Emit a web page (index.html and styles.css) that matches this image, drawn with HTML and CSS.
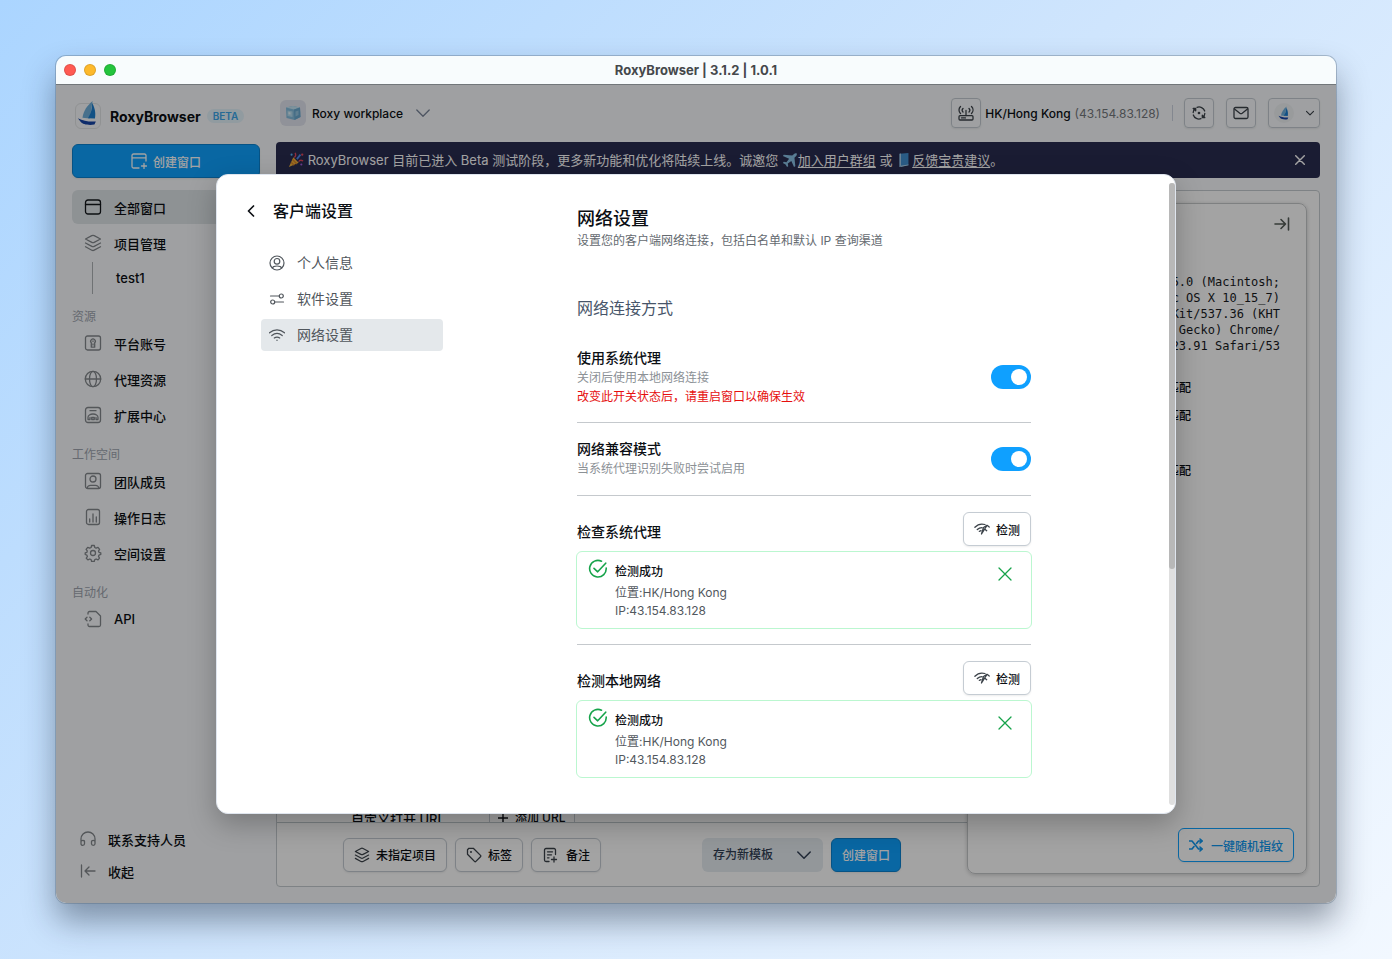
FILE: index.html
```html
<!DOCTYPE html>
<html lang="zh-CN">
<head>
<meta charset="utf-8">
<title>RoxyBrowser</title>
<link rel="stylesheet" href="styles.css">
</head>
<body>
<svg class="defs" aria-hidden="true">
  <symbol id="i-boat" viewBox="0 0 26 30">
    <path d="M18 1C12 6 8 12 7 19l8 1z" fill="#6fb0dc"/>
    <path d="M17.500 3C21 9 21.500 15 20.500 20L13 19.500c3-5 4.500-10 4.500-16.500z" fill="#1d7fd0"/>
    <path d="M2 19.500c6 3 12 4 19.500 3.500L20 26.500c-6 1-13 0-15-3z" fill="#1745a8"/>
  </symbol>
  <symbol id="i-layers" viewBox="0 0 18 18"><path d="M7.800 1.600a2.600 2.600 0 0 1 2.400 0L16.500 5l-6.300 3.300a2.600 2.600 0 0 1-2.400 0L1.500 5zM1.500 9l6.300 3.400a2.600 2.600 0 0 0 2.400 0L16.500 9M1.500 12.800l6.300 3.400a2.600 2.600 0 0 0 2.400 0l6.300-3.400"/></symbol>
  <symbol id="i-chev" viewBox="0 0 14 14"><path d="m.8 4 6.200 6.300L13.200 4"/></symbol>
  <symbol id="i-x" viewBox="0 0 14 14"><path d="m1 1 12 12M13 1 1 13"/></symbol>
  <symbol id="i-signal" viewBox="0 0 16 16"><path d="M.9 6.200C3.500 3.500 7.500 2.500 11 3.500M3.300 8.600c1.400-1.300 3-1.900 4.700-1.900M13 4.300 7.500 13l2-6.500zM11.500 8.700l1.200 1M13.700 4.800l1.500 1.200M5.300 10.300l1.700-.6"/></symbol>
  <symbol id="i-check" viewBox="0 0 20 20"><path d="M13.500 2.200A8.300 8.300 0 1 0 18.200 9M6 9.300l3.700 3.500 8-8.600"/></symbol>
</svg>
<div class="window">
  <header class="titlebar">
    <span class="light red"></span><span class="light amber"></span><span class="light green"></span>
    <h1>RoxyBrowser | 3.1.2 | 1.0.1</h1>
  </header>
  <div class="app">
    <aside class="sidebar">
      <div class="brand">
        <span class="logo"><svg><use href="#i-boat"/></svg></span>
        <strong>RoxyBrowser</strong><span class="beta">BETA</span>
      </div>
      <button class="btn primary wide"><svg class="ic s16" viewBox="0 0 16 16"><path d="M15 8V2.500A1.500 1.500 0 0 0 13.500 1h-11A1.500 1.500 0 0 0 1 2.500v11A1.500 1.500 0 0 0 2.500 15H8M1 4.800h14M13 10.500v5M10.500 13h5"/></svg>创建窗口</button>
      <nav class="menu">
        <a href="#" class="active"><svg class="ic s18" viewBox="0 0 18 18"><rect x="1.500" y="2" width="15" height="14" rx="2.500"/><path d="M1.500 6.500h15"/></svg>全部窗口</a>
        <a href="#"><svg class="ic s18"><use href="#i-layers"/></svg>项目管理</a>
        <a href="#" class="child">test1</a>
        <h2>资源</h2>
        <a href="#"><svg class="ic s18" viewBox="0 0 18 18"><rect x="1.500" y="2" width="15" height="14" rx="2"/><path d="M7.300 8.800a2.300 2.300 0 1 1 3.400 0v4.400H7.300zM9 6.800v.7M9 10v1"/></svg>平台账号</a>
        <a href="#"><svg class="ic s18" viewBox="0 0 18 18"><circle cx="9" cy="9" r="7.700"/><ellipse cx="9" cy="9" rx="3.500" ry="7.700"/><path d="M1.300 9h15.400"/></svg>代理资源</a>
        <a href="#"><svg class="ic s18" viewBox="0 0 18 18"><rect x="1.500" y="1.500" width="15" height="15" rx="2.500"/><path d="M6 4.700h6M4 13v-1.500a5 3.500 0 0 1 10 0V13M4 13.500h2v-2M14 13.500h-2v-2M7.700 11.500v2h2.600v-2z"/></svg>扩展中心</a>
        <h2>工作空间</h2>
        <a href="#"><svg class="ic s18" viewBox="0 0 18 18"><rect x="1.500" y="1.500" width="15" height="15" rx="2"/><circle cx="9" cy="7" r="3"/><path d="M3 16.300c.5-2.300 1.700-3 3.500-3h5c1.800 0 3 .7 3.500 3"/></svg>团队成员</a>
        <a href="#"><svg class="ic s18" viewBox="0 0 18 18"><rect x="2.500" y="1.500" width="13" height="15" rx="2"/><path d="M5.700 11v3M9 6v8M12.300 9v5"/></svg>操作日志</a>
        <a href="#"><svg class="ic s18" viewBox="0 0 18 18"><circle cx="9" cy="9" r="2.500"/><path d="m7.600 1.500-.5 2-1.400.7-2-.9-1.600 2 1.200 1.600-.4 1.400-1.700.5v1.700l1.700.7.500 1.300-1.100 1.700 1.600 1.700 1.900-.9 1.300.6.500 1.900h2.600l.6-1.900 1.300-.6 1.900.9 1.500-1.800-1-1.700.5-1.300 1.800-.7V8.800l-1.800-.5-.5-1.300 1.100-1.700-1.600-2-1.900.9-1.300-.7-.5-2z"/></svg>空间设置</a>
        <h2>自动化</h2>
        <a href="#"><svg class="ic s18" viewBox="0 0 18 18"><path d="M4 4V3a1.500 1.500 0 0 1 1.500-1.500H12L16.500 6v9a1.500 1.500 0 0 1-1.500 1.500H5.500A1.500 1.500 0 0 1 4 15v-1M3 7.200 1.200 9 3 10.800M5.800 7.200 7.600 9l-1.800 1.800"/></svg>API</a>
      </nav>
      <nav class="menu low">
        <a href="#"><svg class="ic s16" viewBox="0 0 16 16"><path d="M1 12V8a7 7 0 0 1 14 0v4M1 10.500C1 9 4.500 9 4.500 10.500v2.300c0 2-3.500 2-3.500 0zM15 10.500c0-1.500-3.500-1.500-3.500 0v2.300c0 2 3.500 2 3.500 0z"/></svg>联系支持人员</a>
        <a href="#"><svg class="ic s16" viewBox="0 0 16 16"><path d="M1.500 2v12M15 8H5M9 4 5 8l4 4"/></svg>收起</a>
      </nav>
    </aside>
    <main class="main">
      <div class="topbar">
        <div class="space">
          <span class="cube"><svg viewBox="0 0 20 20"><path d="m3 4.500 7-1.500 7 1.500.5 9.500-6 3-8-2z" fill="#86bede"/><path d="m3 4.500 8 2 6-2L10 3z" fill="#c4e5f5"/><path d="m11 6.500 6-2 .5 9.500-6 3z" fill="#6aa9d0"/><path d="m4.500 7.500 5 1v5.500l-5-1z" fill="#b5dcf0"/><path d="m12.500 8.500 3-1v4.500l-3 1.500z" fill="#93c6e2"/><path d="m5.500 9 2 .4v2.200l-2-.4z" fill="#e6f6fd"/></svg></span>
          <span class="pick"><select aria-label="工作空间"><option>Roxy workplace</option></select><svg class="ic s14"><use href="#i-chev"/></svg></span>
        </div>
        <button class="square" aria-label="网络"><svg class="ic s16" viewBox="0 0 16 16"><rect x="1" y="10.700" width="14" height="4.300" rx="1"/><path d="M3.500 12.900h4M8 5.500v5M5 3.500c-1 1-1 2.500 0 3.500M11 3.500c1 1 1 2.500 0 3.500M2.500 1.500C.5 3.500.5 6.500 2.500 8.500M13.500 1.500c2 2 2 5 0 7"/></svg></button>
        <p class="place"><b>HK/Hong Kong</b> <span>(43.154.83.128)</span></p>
        <i class="rule"></i>
        <button class="square gap" aria-label="刷新"><svg class="ic s14" viewBox="0 0 14 14"><path d="M5 1.300A6 6 0 0 1 12.700 5M9 12.700A6 6 0 0 1 1.300 9M1.200 6.500a6 6 0 0 1 1.600-3.600M12.800 7.500a6 6 0 0 1-1.600 3.600"/><path d="M1.200 2.500h2.500v2.300zM12.800 11.500h-2.500V9.200z" fill="currentColor"/><circle cx="7" cy="7" r=".7" fill="currentColor"/></svg></button>
        <button class="square gap" aria-label="邮件"><svg class="ic s16" viewBox="0 0 16 16"><rect x="1" y="2.500" width="14" height="11" rx="1.500"/><path d="m1.500 4 5.300 4.200a2 2 0 0 0 2.400 0L14.500 4"/></svg></button>
        <button class="square user gap" aria-label="账号"><span><svg class="face"><use href="#i-boat"/></svg></span><svg class="ic s8"><use href="#i-chev"/></svg></button>
      </div>
      <div class="banner">
        <p><svg class="emo" viewBox="0 0 18 18"><path d="m1 17 5-11 6 6z" fill="#f2b43a"/><path d="m3.500 11.500 3.500 3.500M5 8.500l5 5" stroke="#d9842a" stroke-width="1.500"/><path d="M7 6C9 5 9 3 8 1M12 11c1-2 3-2 5-1" stroke="#e0475c" stroke-width="1.500" fill="none"/><path d="m10 8 4-5" stroke="#4d8bf0" stroke-width="2"/><circle cx="16" cy="3" r="1.300" fill="#e0475c"/><circle cx="4" cy="3" r="1.200" fill="#58b4f4"/><circle cx="15" cy="14" r="1.200" fill="#a45de0"/></svg> RoxyBrowser 目前已进入 Beta 测试阶段，更多新功能和优化将陆续上线。诚邀您 <a href="#"><svg class="emo" viewBox="0 0 18 18"><path d="M16.500 1.500c-2-.7-3 .3-5 2.500L2 3 1 4.500l7 3-3 4-3-.5-1 1.300 3 1.700 1.700 3L7 16l-.5-3 4-3 3 7 1.500-1-1-9.500c2.200-2 3.200-3 2.500-5z" fill="#8cc4e8"/></svg>加入用户群组</a> 或 <a href="#"><svg class="emo" viewBox="0 0 18 18"><path d="m4 2 10-1v14l-10 2z" fill="#4291d2"/><path d="m4 2 1.500-.2v15L4 17zM5 17l9-2v-1l-9 1.500z" fill="#b7d6ec"/></svg>反馈宝贵建议</a>。</p>
        <button aria-label="关闭公告"><svg class="ic s10"><use href="#i-x"/></svg></button>
      </div>
      <section class="panel">
        <div class="left">
          <div class="form"><div class="urlrow"><span>自定义打开 URL</span><button><svg class="ic s10" viewBox="0 0 14 14"><path d="M7 0v14M0 7h14"/></svg>添加 URL</button></div></div>
          <div class="foot">
            <button class="btn"><svg class="ic s16"><use href="#i-layers"/></svg>未指定项目</button>
            <button class="btn"><svg class="ic s16" viewBox="0 0 16 16"><path d="M1.500 2.700v4.500l7 7.200a1 1 0 0 0 1.400 0l4.600-4.600a1 1 0 0 0 0-1.400L7.300 1.300H2.900z"/><circle cx="5" cy="5" r=".4"/></svg>标签</button>
            <button class="btn note-btn"><svg class="ic s16" viewBox="0 0 16 16"><path d="M13.500 7.500V3A1.500 1.500 0 0 0 12 1.500H4A1.500 1.500 0 0 0 2.500 3v10A1.500 1.500 0 0 0 4 14.500h3M5.500 4.800h5M5.500 7.800h4M5.500 10.800h1.500M12 10v5M9.500 12.500h5"/></svg>备注</button>
            <span class="pick tpl"><select aria-label="模板"><option>存为新模板</option></select><svg class="ic s14"><use href="#i-chev"/></svg></span>
            <button class="btn primary">创建窗口</button>
          </div>
        </div>
        <div class="card">
          <button class="fold" aria-label="折叠"><svg class="ic s16" viewBox="0 0 16 16"><path d="M14.500 2v12M1 8h10M7 3.500 11.500 8 7 12.500"/></svg></button>
          <p class="ua">Mozilla/5.0 (Macintosh;<br>Intel Mac OS X 10_15_7)<br>AppleWebKit/537.36 (KHT<br>ML, like Gecko) Chrome/<br>131.0.6723.91 Safari/53</p>
          <ul class="match"><li>基于 IP 匹配</li><li>基于 IP 匹配</li><li class="later">基于 IP 匹配</li></ul>
          <button class="btn outline"><svg class="ic s14" viewBox="0 0 14 14"><path d="M.5 3H3l6.500 8H13M.5 11H3l2-2.500M7.500 5.500 9.500 3H13M11 1l2.300 2L11 5M11 9l2.300 2L11 13"/></svg>一键随机指纹</button>
        </div>
      </section>
    </main>
    <div class="overlay">
      <div class="modal" role="dialog" aria-label="客户端设置">
        <div class="side">
          <div class="head"><button aria-label="返回"><svg class="ic" viewBox="0 0 8 12"><path d="M6.500 1 1.500 6l5 5"/></svg></button><h2>客户端设置</h2></div>
          <nav>
            <a href="#"><svg class="ic s16" viewBox="0 0 16 16"><circle cx="8" cy="8" r="7"/><circle cx="8" cy="6.300" r="2.800"/><path d="M3.300 13c.7-1.800 2-2 4.700-2s4 .2 4.700 2"/></svg>个人信息</a>
            <a href="#"><svg class="ic s16" viewBox="0 0 16 16"><circle cx="12.300" cy="5" r="2"/><circle cx="3.700" cy="11" r="2"/><path d="M1.500 5h8.800M5.700 11h8.800"/></svg>软件设置</a>
            <a href="#" class="on"><svg class="ic s16" viewBox="0 0 16 16"><path d="M.5 5.800c4.500-4 10.500-4 15 0M2.800 8.500c3.300-2.700 7.100-2.700 10.400 0M5.300 11c1.800-1.200 3.600-1.200 5.400 0M8 13.200v.2"/></svg>网络设置</a>
          </nav>
        </div>
        <div class="body">
          <h2>网络设置</h2>
          <p class="lead">设置您的客户端网络连接，包括白名单和默认 IP 查询渠道</p>
          <h3>网络连接方式</h3>
          <div class="row first"><div><label for="sys">使用系统代理</label><p>关闭后使用本地网络连接</p><p class="warn">改变此开关状态后，请重启窗口以确保生效</p></div><input type="checkbox" id="sys" class="toggle" checked></div>
          <div class="row"><div><label for="compat">网络兼容模式</label><p>当系统代理识别失败时尝试启用</p></div><input type="checkbox" id="compat" class="toggle" checked></div>
          <div class="probe">
            <div class="cap"><h4>检查系统代理</h4><button class="btn"><svg class="ic s16"><use href="#i-signal"/></svg>检测</button></div>
            <div class="result"><svg class="ic s20"><use href="#i-check"/></svg><div><b>检测成功</b><p>位置:HK/Hong Kong</p><p>IP:43.154.83.128</p></div><button aria-label="关闭"><svg class="ic s14"><use href="#i-x"/></svg></button></div>
          </div>
          <div class="probe last">
            <div class="cap"><h4>检测本地网络</h4><button class="btn"><svg class="ic s16"><use href="#i-signal"/></svg>检测</button></div>
            <div class="result"><svg class="ic s20"><use href="#i-check"/></svg><div><b>检测成功</b><p>位置:HK/Hong Kong</p><p>IP:43.154.83.128</p></div><button aria-label="关闭"><svg class="ic s14"><use href="#i-x"/></svg></button></div>
          </div>
        </div>
        <div class="track"><span></span></div>
      </div>
    </div>
  </div>
</div>
</body>
</html>
```
FILE: styles.css
```css
* { box-sizing: border-box; }
body, h1, h2, h3, h4, p, ul { margin: 0; padding: 0; }
ul { list-style: none; }
button, select { font: inherit; color: inherit; border: 0; background: none; padding: 0; }
a { color: inherit; text-decoration: none; }
body {
  min-height: 100vh; display: flex; padding: 56px;
  background: linear-gradient(135deg, #abd5ff 0%, #cfe5fd 48%, #f2f8ff 100%);
  font-family: Inter, "Noto Sans CJK SC", sans-serif; font-size: 13px; color: #0c0f14;
}
.defs { position: absolute; width: 0; height: 0; }
.ic { fill: none; stroke: currentColor; stroke-width: 1.3; stroke-linecap: round; stroke-linejoin: round; flex: none; }
.s8 { width: 8px; height: 8px; stroke-width: 2; }
.s10 { width: 10px; height: 10px; stroke-width: 2; }
.s14 { width: 14px; height: 14px; }
.s16 { width: 16px; height: 16px; }
.s18 { width: 18px; height: 18px; }
.s20 { width: 20px; height: 20px; stroke-width: 1.6; }

.window {
  flex: 1; display: flex; flex-direction: column; border-radius: 10px; overflow: hidden;
  box-shadow: 0 0 0 1px rgba(80, 100, 120, .35), 0 18px 32px rgba(20, 30, 50, .42);
}
.titlebar { display: flex; align-items: center; gap: 8px; height: 29px; padding: 0 8px; background: #f8fcfd; border-bottom: 1px solid #72777a; }
.titlebar h1 { flex: 1; text-align: center; font-size: 13px; line-height: 16px; font-weight: 700; color: #45484b; margin-right: 60px; }
.light { width: 12px; height: 12px; border-radius: 50%; border: 1px solid rgba(0, 0, 0, .12); }
.red { background: #ff5a52; } .amber { background: #fdb92b; } .green { background: #24c43c; }

.app { position: relative; flex: 1; display: grid; grid-template-columns: 220px 1fr; background: #f9fbfd; }
.sidebar { padding: 15px 16px 16px; display: flex; flex-direction: column; }
.brand { display: flex; align-items: center; height: 32px; margin-bottom: 12px; padding-left: 3px; }
.brand strong { font-size: 14px; font-weight: 700; margin: 0 6px 0 9px; }
.logo { width: 26px; height: 26px; border: 1px solid #e2e4e6; border-radius: 6px; display: flex; align-items: flex-end; justify-content: center; }
.logo svg { width: 24px; height: 28px; flex: none; }
.beta { font-size: 10px; font-weight: 600; color: #3aa6ea; background: #e3f2fb; border-radius: 8px; padding: 1px 6px; }
.btn {
  display: inline-flex; align-items: center; justify-content: center; gap: 6px; height: 34px; padding: 0 10px;
  border: 1px solid #c5ccd3; border-radius: 6px; background: #fff; font-size: 12px; font-weight: 500; white-space: nowrap;
  box-shadow: 0 1px 2px rgba(0, 0, 0, .08);
}
.btn .ic { color: #3c434a; }
.primary { background: #0fa2ff; border-color: #0b83d0; color: #fff; }
.primary .ic { color: #fff; }
.wide { flex: none; margin-bottom: 12px; }
.menu { display: flex; flex-direction: column; gap: 2px; }
.menu a { display: flex; align-items: center; gap: 12px; height: 34px; padding: 0 12px; border-radius: 6px; font-weight: 500; }
.menu .ic { color: #84888d; }
.menu .active { background: #dfe4e8; }
.menu .active .ic { color: #14181c; }
.menu .child { height: 32px; margin-left: 20px; padding-left: 23px; border-left: 1px solid #aeb2b6; border-radius: 0; }
.menu h2 { font-size: 12px; font-weight: 400; line-height: 20px; color: #a0a5b0; margin: 11px 0 -3px; }
.low { margin-top: auto; gap: 0; }
.low a { height: 32px; padding: 0 8px; }

.main { display: flex; flex-direction: column; padding: 0 16px 16px 0; min-width: 0; }
.topbar { height: 56px; margin-bottom: 1px; display: flex; align-items: center; }
.space { flex: 1; display: flex; align-items: center; padding-left: 4px; gap: 6px; }
.cube { width: 26px; height: 26px; border-radius: 6px; background: #e2e4ef; display: grid; place-items: center; }
.cube svg { width: 20px; height: 20px; }
.pick { position: relative; display: inline-flex; align-items: center; font-size: 12px; font-weight: 500; }
.pick select { appearance: none; padding-right: 26px; outline: 0; }
.pick .ic { position: absolute; right: 0; pointer-events: none; color: #7a859a; }
.square { width: 30px; height: 30px; display: flex; align-items: center; justify-content: center; border: 1px solid #c5ccd3; border-radius: 4px; color: #3c434a; box-shadow: 0 1px 2px rgba(0, 0, 0, .08); }
.gap { margin-left: 12px; }
.user { width: 52px; gap: 12px; }
.user span { width: 20px; height: 20px; border-radius: 50%; background: #f0f2f5; display: grid; place-items: center; }
.face { width: 14px; height: 15px; }
.place { display: flex; gap: 4px; padding: 0 12px 0 4px; font-size: 12px; white-space: nowrap; }
.place b { font-weight: 500; }
.place span { color: #75797e; }
.rule { width: 1px; height: 16px; background: #cdd3e0; margin-right: -1px; }
.banner { height: 36px; display: flex; align-items: center; justify-content: space-between; padding: 0 14px 0 12px; background: #2a2c51; color: #fff; border-radius: 4px; }
.banner p { white-space: nowrap; line-height: 18px; }
.banner a { text-decoration: underline; text-underline-offset: 2px; }
.emo { width: 16px; height: 16px; vertical-align: -3px; }
.banner button { display: flex; padding: 1px; }
.panel { flex: 1; margin-top: 12px; border: 1px solid #c6cbd0; border-radius: 4px; background: #fff; display: grid; grid-template-columns: 1fr 340px; padding-right: 12px; }
.left { display: flex; flex-direction: column; min-width: 0; }
.form { flex: 1; display: flex; flex-direction: column; justify-content: flex-end; height: 0; overflow: hidden; padding-left: 74px; }
.urlrow { display: flex; align-items: center; gap: 44px; height: 32px; margin-bottom: -12px; flex: none; font-weight: 500; }
.urlrow button { display: flex; align-items: center; gap: 7px; height: 28px; padding: 0 8px; border: 1px solid #c5ccd3; font-size: 12px; line-height: 16px; }
.foot { display: flex; align-items: center; gap: 8px; height: 64px; padding: 0 66px; border-top: 1px solid #c0c8ce; }
.note-btn { gap: 8px; margin-right: auto; }
.tpl { width: 121px; height: 34px; border-radius: 6px; background: #e6ecf1; color: #334155; }
.tpl select { width: 100%; height: 100%; padding-left: 11px; }
.tpl .ic { right: 12px; color: #334155; stroke-width: 1.5; }
.card { margin: 12px 0; border: 1px solid #c6c8ca; border-radius: 8px; display: flex; flex-direction: column; align-items: flex-end; padding: 12px 12px 11px; box-shadow: 0 1px 4px rgba(0, 0, 0, .2); }
.fold { display: flex; margin: 0 4px 42px; color: #555d58; }
.fold .ic { stroke-width: 1.6; }
.ua { font: 12px/16px "DejaVu Sans Mono", monospace; margin-right: 14px; color: #171a1e; white-space: nowrap; }
.match { margin: 20px 103px 0 0; font-size: 12px; font-weight: 500; line-height: 28px; }
.later { margin-top: 27px; }
.outline { margin-top: auto; border-color: #0fa2ff; color: #0f98f0; padding: 0 10px; gap: 8px; }
.outline .ic { color: #0f98f0; stroke-width: 1.6; }

.overlay { position: absolute; inset: 0; display: grid; place-items: center; background: rgba(0, 0, 0, .36); }
.modal { position: relative; width: 75%; height: 640px; display: flex; background: #fff; border: 1px solid #dfe5ee; border-radius: 12px; overflow: hidden; box-shadow: 0 10px 28px rgba(0, 0, 0, .25); }
.side { width: 360px; flex: none; padding: 24px 0 0 28px; }
.head { display: flex; align-items: center; gap: 16px; height: 24px; }
.head button { display: flex; width: 12px; justify-content: center; }
.head .ic { width: 8px; height: 12px; stroke-width: 1.7; }
.head h2 { font-size: 16px; font-weight: 500; line-height: 22px; }
.side nav { display: grid; gap: 4px; width: 182px; margin: 24px 0 0 16px; }
.side nav a { display: flex; align-items: center; gap: 12px; height: 32px; padding: 0 8px; border-radius: 4px; font-size: 14px; line-height: 20px; color: #50565c; }
.side nav .ic { stroke-width: 1.2; }
.side nav .on { background: #e4e8eb; }
.body { width: 454px; padding-top: 30px; }
.body > h2 { font-size: 18px; line-height: 28px; font-weight: 500; }
.lead { font-size: 12px; line-height: 16px; color: #646a70; }
.body h3 { font-size: 16px; line-height: 24px; font-weight: 400; color: #475569; margin-top: 47px; }
.row { display: flex; justify-content: space-between; align-items: center; padding: 16px 0; border-bottom: 1px solid #c5c9cd; }
.first { padding-top: 28px; }
.row label { display: block; font-size: 14px; line-height: 20px; font-weight: 500; }
.row p { font-size: 12px; line-height: 20px; color: #8c9196; }
.row .warn { line-height: 18px; color: #e60f0f; }
.toggle { appearance: none; width: 40px; height: 24px; margin: 0; padding: 4px; border-radius: 12px; background: #b9bec4; display: flex; }
.toggle:checked { background: #0fa0ff; justify-content: flex-end; }
.toggle::before { content: ""; width: 16px; height: 16px; border-radius: 50%; background: #fff; }
.probe { padding: 16px 0 15px; border-bottom: 1px solid #c5c9cd; }
.last { border-bottom: 0; }
.cap { display: flex; justify-content: space-between; align-items: flex-end; }
.cap h4 { font-size: 14px; font-weight: 500; line-height: 28px; }
.result { display: flex; align-items: flex-start; margin: 5px -1px 0; height: 78px; padding: 7px 19px 0 11px; border: 1px solid #bbf7d0; border-radius: 6px; color: #16a34a; font-size: 12px; line-height: 18px; }
.result div { flex: 1; padding: 3px 0 0 7px; color: #52585e; }
.result b { display: block; font-weight: 500; line-height: 20px; color: #0c0f14; margin-bottom: 2px; }
.result button { display: flex; padding-top: 8px; }
.track { position: absolute; top: 8px; right: 0; bottom: 8px; width: 6px; border-radius: 3px; background: #dfdfdf; }
.track span { display: block; height: 62%; border-radius: 3px; background: #b8b8b8; }
```
